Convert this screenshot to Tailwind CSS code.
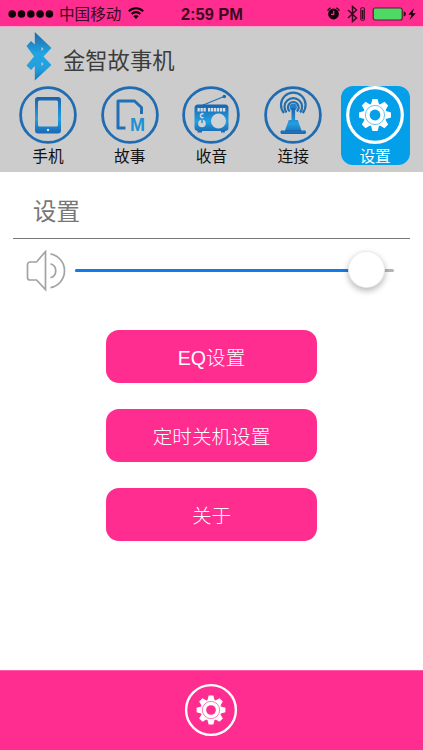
<!DOCTYPE html>
<html lang="zh-CN">
  <head>
    <meta charset="UTF-8" />
    <meta name="viewport" content="width=device-width, initial-scale=1.0" />
    <title>金智故事机</title>
    <script src="https://cdn.jsdelivr.net/npm/@tailwindcss/browser@4"></script>
  </head>
  <body class="bg-white font-['Liberation_Sans','Noto_Sans_CJK_SC',sans-serif]">
    <!-- Shared gradients and the gear shape -->
    <svg class="absolute w-0 h-0" aria-hidden="true">
      <defs>
        <linearGradient id="blue" x1="0" y1="0" x2="0" y2="1">
          <stop offset="0" stop-color="#1b62ad" />
          <stop offset="0.6" stop-color="#229fe0" />
          <stop offset="1" stop-color="#1b68b4" />
        </linearGradient>
        <linearGradient id="logo" x1="0" y1="0" x2="0" y2="1">
          <stop offset="0" stop-color="#1f66a8" />
          <stop offset="0.45" stop-color="#22a5e2" />
          <stop offset="0.75" stop-color="#22a0de" />
          <stop offset="1" stop-color="#1f74b8" />
        </linearGradient>
        <g id="gear">
          <circle r="11.6" />
          <path id="tooth" d="M-4.2 -10 L-2.6 -16 H2.6 L4.2 -10z" />
          <use href="#tooth" transform="rotate(45)" />
          <use href="#tooth" transform="rotate(90)" />
          <use href="#tooth" transform="rotate(135)" />
          <use href="#tooth" transform="rotate(180)" />
          <use href="#tooth" transform="rotate(225)" />
          <use href="#tooth" transform="rotate(270)" />
          <use href="#tooth" transform="rotate(315)" />
        </g>
      </defs>
    </svg>

    <div class="w-[423px] h-[750px] flex flex-col overflow-hidden">
      <!-- Status bar -->
      <div class="h-[27px] shrink-0 bg-[#ff2d90] border-b border-[#f3a6c8] flex items-center text-[#3a0920]">
        <div class="w-[181px] flex items-center pl-[8px]">
          <svg class="mt-px" width="46" height="10" viewBox="0 0 46 10" fill="#12030b">
            <circle cx="4.2" cy="5" r="3.8" />
            <circle cx="13.5" cy="5" r="3.8" />
            <circle cx="22.8" cy="5" r="3.8" />
            <circle cx="32.1" cy="5" r="3.8" />
            <circle cx="41.4" cy="5" r="3.8" />
          </svg>
          <span class="ml-[5px] pt-[3px] text-[15.6px] leading-[24px]">中国移动</span>
          <svg class="ml-[7px]" width="16" height="12" viewBox="0 0 16 12" fill="none" stroke="#12030b" stroke-width="2.1">
            <path d="M0.8 4.2 a10.2 10.2 0 0 1 14.4 0" />
            <path d="M3.6 7 a6.2 6.2 0 0 1 8.8 0" />
            <path d="M8 12 L5.4 9.3 a3.8 3.8 0 0 1 5.2 0z" fill="#12030b" stroke="none" />
          </svg>
        </div>
        <span class="w-[146px] pt-px text-[16.4px] font-bold leading-[24px]">2:59 PM</span>
        <svg width="13" height="13" viewBox="0 0 13 13" fill="#12030b">
          <circle cx="6.5" cy="7" r="5.4" />
          <path d="M0.6 3.6 A8 8 0 0 1 3.6 0.9 M9.4 0.9 A8 8 0 0 1 12.4 3.6" fill="none" stroke="#12030b" stroke-width="1.2" />
          <path d="M6.7 3.8 V7.4 H4" fill="none" stroke="#ff2d90" stroke-width="1.2" />
        </svg>
        <svg class="ml-[7px] mt-px" width="19" height="18" viewBox="0 0 19 18" fill="none" stroke="#3a0920">
          <path d="M1 5 L9.5 13 L5.5 16.5 V1.5 L9.5 5 L1 13" stroke-width="1.5" />
          <rect x="13.8" y="2.8" width="3.6" height="12.4" rx="0.6" stroke-width="1" />
          <path d="M15.6 5 V14" stroke-width="1.8" />
        </svg>
        <svg class="ml-[6px] mt-px" width="46" height="14" viewBox="0 0 46 14">
          <rect x="1.2" y="1" width="29" height="12" rx="2" fill="#4cd964" stroke="#5c1c38" stroke-width="1.2" />
          <path d="M31.6 4.6 a2.4 2.4 0 0 1 0 4.8z" fill="#3a0920" />
          <path d="M41.8 1.2 L36.4 7.8 H39.6 L37.6 13 L43.8 6.2 H40.5z" fill="#12030b" />
        </svg>
      </div>

      <!-- Header -->
      <header class="h-[145px] shrink-0 bg-[#cccccc]">
        <div class="h-[59px] flex pl-[25px]">
          <svg class="mt-[5px]" width="28" height="49" viewBox="0 0 28 49">
            <path d="M9.8 0 L26.5 16 L18.5 24.5 L26.5 33 L9.8 48.5 V34 L6 38 L1.500 33.500 L9 24.500 L1.500 14 L6 9 L9.800 12.500z M16.500 15 V19 L18.500 17z M16.500 30 V34 L18.500 32z" fill="url(#logo)" fill-rule="evenodd" />
          </svg>
          <h1 class="ml-[10px] mt-[18px] text-[22.3px] leading-[34px] text-[#3c3c3c]">金智故事机</h1>
        </div>

        <nav class="h-[79px] px-[7px] grid grid-cols-5 text-[15.7px] text-[#111]">
          <a class="flex flex-col items-center">
            <svg width="58" height="58" viewBox="0 0 58 58">
              <circle cx="29" cy="29" r="27.4" fill="none" stroke="#206cb3" stroke-width="2.8" />
              <path d="M19 11 H39 a3 3 0 0 1 3 3 V44.5 a3 3 0 0 1 -3 3 H19 a3 3 0 0 1 -3 -3 V14 a3 3 0 0 1 3 -3z M20.5 14.5 a1.5 1.5 0 0 0 -1.5 1.5 V39 a1.5 1.5 0 0 0 1.5 1.5 H37.5 a1.5 1.5 0 0 0 1.5 -1.5 V16 a1.5 1.5 0 0 0 -1.5 -1.5z" fill="url(#blue)" fill-rule="evenodd" />
              <circle cx="29" cy="44" r="1.2" fill="#c9e4f5" />
            </svg>
            <span class="leading-[26px]">手机</span>
          </a>
          <a class="flex flex-col items-center">
            <svg width="58" height="58" viewBox="0 0 58 58">
              <circle cx="29" cy="29" r="27.4" fill="none" stroke="#206cb3" stroke-width="2.8" />
              <path d="M24.5 42 H17 V15 H33.5 L40.5 21.5 V28" fill="none" stroke="#226fb6" stroke-width="3" stroke-linejoin="round" />
              <text x="36.5" y="45" text-anchor="middle" font-size="18" font-weight="bold" fill="#2190d3">M</text>
            </svg>
            <span class="leading-[26px]">故事</span>
          </a>
          <a class="flex flex-col items-center">
            <svg width="58" height="58" viewBox="0 0 58 58">
              <circle cx="29" cy="29" r="27.4" fill="none" stroke="#206cb3" stroke-width="2.8" />
              <path d="M20 19.5 L42 10.5" stroke="#2373b5" stroke-width="1.3" />
              <circle cx="42.3" cy="10.5" r="1.8" fill="#1d66b0" />
              <path d="M16 18.5 H43 a3.5 3.5 0 0 1 3.5 3.5 V41.5 a3.5 3.5 0 0 1 -3.5 3.5 V46.5 H39 V45 H20 V46.5 H15.5 V45 a3.5 3.5 0 0 1 -3 -3.5 V22 a3.5 3.5 0 0 1 3.5 -3.5z" fill="url(#blue)" />
              <path d="M15.5 23.7 H24 M26 23.7 H44" stroke="#d5dde2" stroke-width="3.4" stroke-dasharray="2.3 0.7" />
              <circle cx="36.5" cy="35" r="7.5" fill="#d0d3d5" />
              <circle cx="20" cy="37.5" r="3.8" fill="#d0d3d5" />
              <path d="M20 33.5 V37" stroke="#1f8bd0" stroke-width="1.4" />
              <path d="M21.5 28 a2 2 0 1 0 0 3.4" fill="none" stroke="#d0d3d5" stroke-width="1.6" />
            </svg>
            <span class="leading-[26px]">收音</span>
          </a>
          <a class="flex flex-col items-center">
            <svg width="58" height="58" viewBox="0 0 58 58">
              <circle cx="29" cy="29" r="27.4" fill="none" stroke="#206cb3" stroke-width="2.8" />
              <g fill="none" stroke="#236fae" stroke-width="2.2">
                <path d="M25.8 25.5 a5.4 5.4 0 1 1 7 0" />
                <path d="M22.5 26.5 a8.8 8.8 0 1 1 13.6 0" />
                <path d="M20 27 a12.3 12.3 0 1 1 18.6 0" />
              </g>
              <circle cx="29.3" cy="21" r="3.6" fill="#2380c6" />
              <path d="M27.5 22 H31.1 V34 H33.8 L37.5 44.5 H39.5 a1.7 1.7 0 0 1 1.5 3.5 H17.5 a1.7 1.7 0 0 1 1.5 -3.5 H21 L24.8 34 H27.5z" fill="url(#blue)" />
              <path d="M21 44.5 H37.5" stroke="#1b62ad" stroke-width="0.8" />
            </svg>
            <span class="leading-[26px]">连接</span>
          </a>
          <a class="w-[69px] h-[79px] justify-self-center rounded-[12px] bg-[#039fe9] flex flex-col items-center text-white">
            <svg class="shrink-0" width="58" height="58" viewBox="0 0 58 58">
              <circle cx="29" cy="29" r="27.3" fill="none" stroke="#fff" stroke-width="3.2" />
              <g transform="translate(29 29)">
                <use href="#gear" fill="#fff" />
                <circle r="9.6" fill="none" stroke="#039fe9" stroke-width="0.6" />
                <circle r="5.4" fill="#039fe9" />
              </g>
            </svg>
            <span class="leading-[26px]">设置</span>
          </a>
        </nav>
      </header>

      <!-- Settings -->
      <main class="grow px-[13px]">
        <h2 class="h-[67px] pl-[20px] pt-[23px] border-b border-[#777] text-[23.5px] leading-[34px] text-[#777]">设置</h2>
        <div class="h-[64px] pl-[12px] flex items-center">
          <svg width="42" height="42" viewBox="0 0 42 42" fill="none" stroke="#a3a3a3" stroke-width="1.7">
            <path d="M20.5 1.5 L11.5 12 H5 a2.5 2.5 0 0 0 -2.5 2.5 V27.5 a2.5 2.5 0 0 0 2.5 2.5 H11.5 L20.5 39.5z" />
            <path d="M25.5 13.8 a7.3 7.3 0 0 1 0 14" />
            <path d="M25.5 3.8 a17.2 17.2 0 0 1 0 33.8" />
          </svg>
          <!-- Volume slider -->
          <div class="relative ml-[8px] -mt-px w-[319px] h-[3px] rounded-full bg-[#b5b5b5]">
            <div class="h-[3px] rounded-full bg-[#137be9]" style="width: 91%"></div>
            <div class="absolute left-[273px] -top-[18px] size-[37px] rounded-full bg-white border border-black/8 shadow-[0_3px_6px_rgba(0,0,0,0.28)]"></div>
          </div>
        </div>
        <div class="pt-[27px] flex flex-col items-center gap-[26px] text-[19.6px] font-light text-white">
          <button class="w-[211px] h-[53px] pt-[4px] rounded-[13px] bg-[#ff2d90]">EQ设置</button>
          <button class="w-[211px] h-[53px] pt-[4px] rounded-[13px] bg-[#ff2d90]">定时关机设置</button>
          <button class="w-[211px] h-[53px] pt-[4px] rounded-[13px] bg-[#ff2d90]">关于</button>
        </div>
      </main>

      <!-- Bottom bar -->
      <footer class="h-[80px] shrink-0 bg-[#ff2d90] border-t border-[#ff5ca9] flex items-center justify-center">
        <svg class="-mt-px mr-px" width="54" height="54" viewBox="-27 -27 54 54">
          <circle r="24.9" fill="none" stroke="#fff" stroke-width="2.4" />
          <g transform="scale(0.9)">
            <use href="#gear" fill="#fff" />
            <circle r="9.6" fill="none" stroke="#ff2d90" stroke-width="0.7" />
            <circle r="5.4" fill="#ff2d90" />
          </g>
        </svg>
      </footer>
    </div>
  </body>
</html>
